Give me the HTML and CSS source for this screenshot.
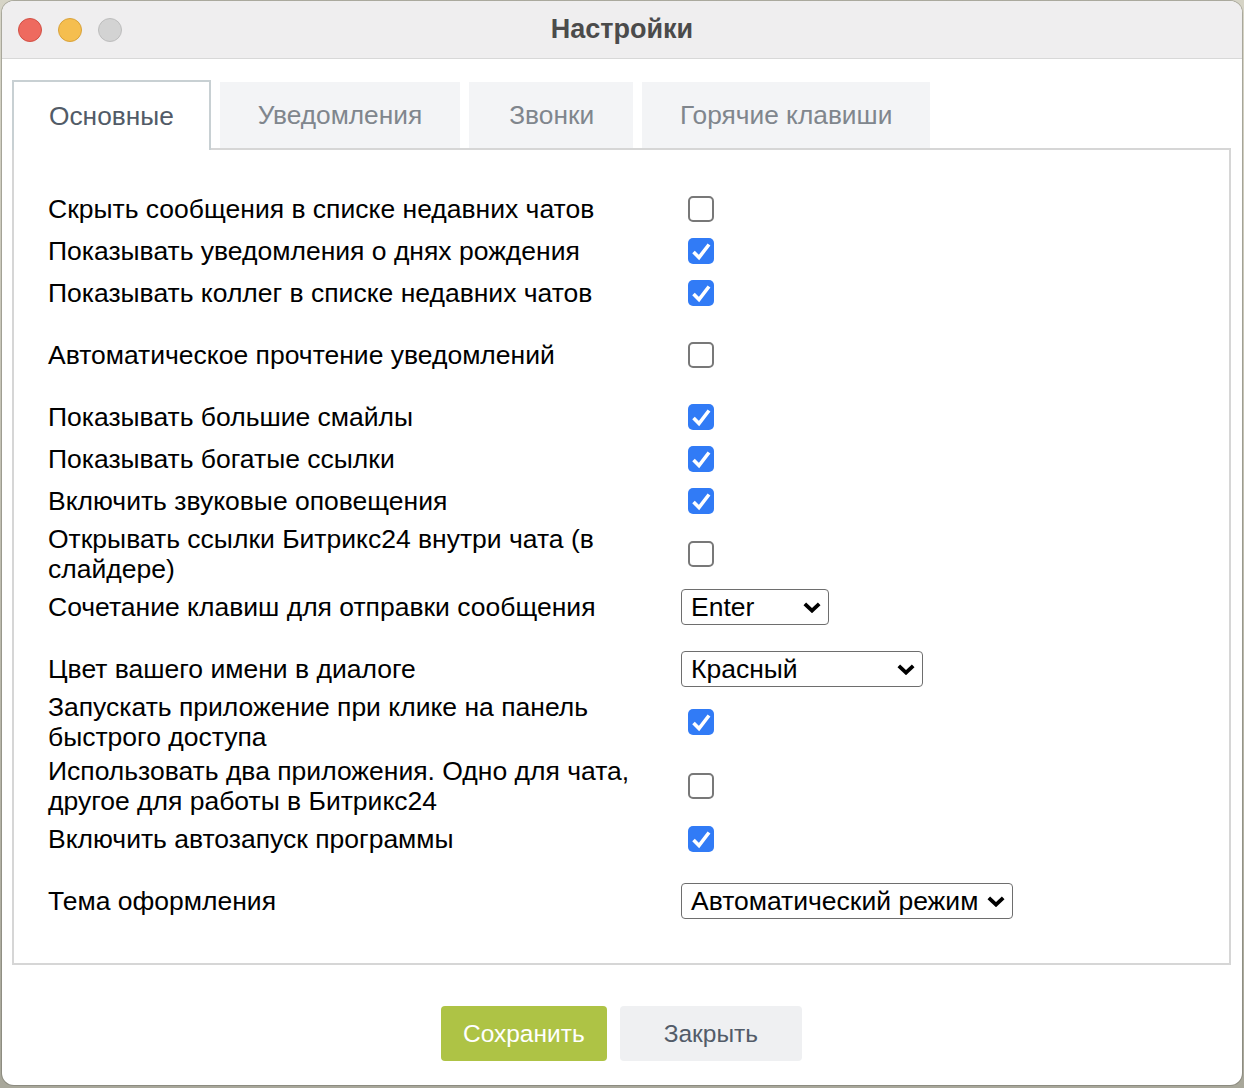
FILE: index.html
```html
<!DOCTYPE html>
<html lang="ru">
<head>
<meta charset="utf-8">
<title>Настройки</title>
<link rel="stylesheet" href="styles.css">
</head>
<body>
<div class="window">
  <header class="titlebar">
    <div class="lights">
      <span class="light red"></span>
      <span class="light yellow"></span>
      <span class="light gray"></span>
    </div>
    <div class="title">Настройки</div>
    <div></div>
  </header>
  <main class="content">
    <nav class="tabs">
      <div class="tab active">Основные</div>
      <div class="tab">Уведомления</div>
      <div class="tab t-calls">Звонки</div>
      <div class="tab">Горячие клавиши</div>
    </nav>
    <section class="panel">
      <div class="row"><div class="label">Скрыть сообщения в списке недавних чатов</div><div class="ctl"><span class="cb"></span></div></div>
      <div class="row"><div class="label">Показывать уведомления о днях рождения</div><div class="ctl"><span class="cb on"><svg viewBox="0 0 26 26"><path d="M5.5 14 L11 19.5 L21 6.5"/></svg></span></div></div>
      <div class="row"><div class="label">Показывать коллег в списке недавних чатов</div><div class="ctl"><span class="cb on"><svg viewBox="0 0 26 26"><path d="M5.5 14 L11 19.5 L21 6.5"/></svg></span></div></div>
      <div class="row spaced"><div class="label">Автоматическое прочтение уведомлений</div><div class="ctl"><span class="cb"></span></div></div>
      <div class="row spaced"><div class="label">Показывать большие смайлы</div><div class="ctl"><span class="cb on"><svg viewBox="0 0 26 26"><path d="M5.5 14 L11 19.5 L21 6.5"/></svg></span></div></div>
      <div class="row"><div class="label">Показывать богатые ссылки</div><div class="ctl"><span class="cb on"><svg viewBox="0 0 26 26"><path d="M5.5 14 L11 19.5 L21 6.5"/></svg></span></div></div>
      <div class="row"><div class="label">Включить звуковые оповещения</div><div class="ctl"><span class="cb on"><svg viewBox="0 0 26 26"><path d="M5.5 14 L11 19.5 L21 6.5"/></svg></span></div></div>
      <div class="row"><div class="label">Открывать ссылки Битрикс24 внутри чата (в слайдере)</div><div class="ctl"><span class="cb"></span></div></div>
      <div class="row"><div class="label">Сочетание клавиш для отправки сообщения</div><div class="ctl"><div class="select w-enter"><span>Enter</span><svg viewBox="0 0 18 11"><path d="M1.8 1.8 L9 8.6 L16.2 1.8"/></svg></div></div></div>
      <div class="row spaced"><div class="label">Цвет вашего имени в диалоге</div><div class="ctl"><div class="select w-color"><span>Красный</span><svg viewBox="0 0 18 11"><path d="M1.8 1.8 L9 8.6 L16.2 1.8"/></svg></div></div></div>
      <div class="row"><div class="label">Запускать приложение при клике на панель быстрого доступа</div><div class="ctl"><span class="cb on"><svg viewBox="0 0 26 26"><path d="M5.5 14 L11 19.5 L21 6.5"/></svg></span></div></div>
      <div class="row"><div class="label">Использовать два приложения. Одно для чата, другое для работы в Битрикс24</div><div class="ctl"><span class="cb"></span></div></div>
      <div class="row"><div class="label">Включить автозапуск программы</div><div class="ctl"><span class="cb on"><svg viewBox="0 0 26 26"><path d="M5.5 14 L11 19.5 L21 6.5"/></svg></span></div></div>
      <div class="row spaced"><div class="label">Тема оформления</div><div class="ctl"><div class="select w-theme"><span>Автоматический режим</span><svg viewBox="0 0 18 11"><path d="M1.8 1.8 L9 8.6 L16.2 1.8"/></svg></div></div></div>
    </section>
    <div class="buttons">
      <button class="btn save">Сохранить</button>
      <button class="btn close">Закрыть</button>
    </div>
  </main>
</div>
</body>
</html>
```

FILE: styles.css
```css
html, body {
  margin: 0;
  padding: 0;
}
body {
  background: linear-gradient(#d6d4c6, #a8a79a);
  font-family: "Liberation Sans", Arial, sans-serif;
  width: 1244px;
  height: 1088px;
  overflow: hidden;
}
.window {
  margin: 1px 2px 0 2px;
  height: 1084px;
  background: #ffffff;
  border-radius: 12px;
  overflow: hidden;
  box-shadow: 0 0 0 1px rgba(90, 90, 80, 0.35);
}
.titlebar {
  height: 57px;
  background: #efeeef;
  border-bottom: 1px solid #d8d8d8;
  display: grid;
  grid-template-columns: 1fr auto 1fr;
  align-items: center;
}
.lights {
  display: flex;
  gap: 16px;
  padding-left: 16px;
  padding-top: 1px;
}
.light {
  width: 24px;
  height: 24px;
  border-radius: 50%;
  box-sizing: border-box;
}
.red { background: #ee6a5f; border: 1px solid #d25045; }
.yellow { background: #f5be4f; border: 1px solid #d9a23a; }
.gray { background: #d3d3d3; border: 1px solid #bdbdbd; }
.title {
  font-size: 27px;
  font-weight: bold;
  color: #4b4b4b;
  padding-bottom: 1px;
}
.content {
  padding: 21px 11px 0 10px;
}
.tabs {
  display: flex;
  align-items: flex-end;
  gap: 9px;
  height: 68px;
}
.tab {
  height: 66px;
  box-sizing: border-box;
  padding: 0 38px;
  display: flex;
  align-items: center;
  background: #f3f4f6;
  color: #80868d;
  font-size: 26.3px;
}
.tab.t-calls {
  padding: 0 39px 0 40px;
}
.tab.active {
  height: 70px;
  margin-bottom: -2px;
  padding: 0 35px;
  background: #ffffff;
  color: #525b67;
  border: 2px solid #c8d0d3;
  border-bottom: none;
  position: relative;
  z-index: 1;
}
.panel {
  border: 2px solid #d6d6d6;
  padding: 38px 20px 41px 34px;
}
.row {
  display: grid;
  grid-template-columns: 633px auto;
  align-items: center;
  min-height: 42px;
}
.row.spaced {
  margin-top: 20px;
}
.label {
  font-size: 26.5px;
  line-height: 30px;
  padding: 2px 8px 2px 0;
  color: #000;
}
.ctl {
  display: flex;
  align-items: center;
}
.cb {
  width: 26px;
  height: 26px;
  margin-left: 7px;
  box-sizing: border-box;
  border: 2px solid #787878;
  border-radius: 5px;
  background: #fff;
  display: block;
}
.cb.on {
  background: #317bf6;
  border: none;
}
.cb svg {
  display: block;
  width: 26px;
  height: 26px;
}
.cb svg path {
  fill: none;
  stroke: #ffffff;
  stroke-width: 3.6;
}
.select {
  height: 36px;
  box-sizing: border-box;
  border: 1.5px solid #6e6e6e;
  border-radius: 4px;
  display: flex;
  align-items: center;
  justify-content: space-between;
  padding: 0 7px 0 9px;
  font-size: 26.5px;
  color: #000;
}
.select svg {
  width: 18px;
  height: 11px;
  flex: none;
}
.select svg path {
  fill: none;
  stroke: #000;
  stroke-width: 3.8;
}
.w-enter { width: 148px; }
.w-color { width: 242px; }
.w-theme { width: 332px; }
.buttons {
  display: flex;
  justify-content: center;
  gap: 13px;
  margin-top: 41px;
}
.btn {
  height: 55px;
  border: none;
  border-radius: 4px;
  font-family: "Liberation Sans", Arial, sans-serif;
  font-size: 24.5px;
  cursor: pointer;
}
.btn.save {
  background: #aec345;
  color: #ffffff;
  padding: 0 22px;
}
.btn.close {
  background: #eff0f2;
  color: #535c69;
  padding: 0 44px;
}
```
